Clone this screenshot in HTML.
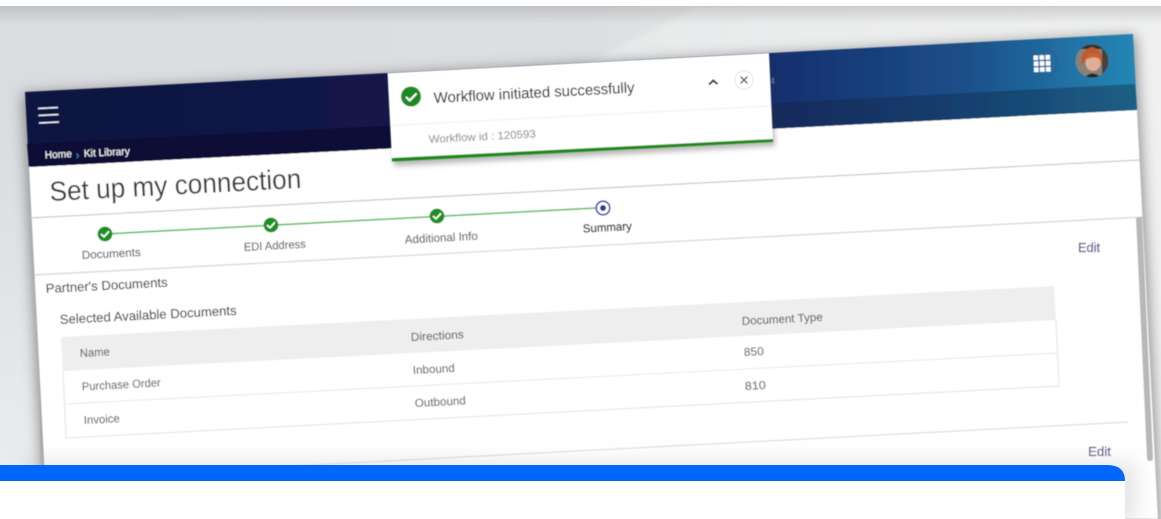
<!DOCTYPE html>
<html><head><meta charset="utf-8"><title>Set up my connection</title>
<style>
html,body{margin:0;padding:0;background:#fff;width:1161px;height:519px;overflow:hidden}
svg{display:block}
text{font-family:"Liberation Sans",sans-serif}
</style></head><body>
<svg width="1161" height="519" viewBox="0 0 1161 519" xmlns="http://www.w3.org/2000/svg">
<defs>
<linearGradient id="bg" x1="0" y1="0" x2="1" y2="0"><stop offset="0" stop-color="#dadde0"/><stop offset=".5" stop-color="#dcdee0"/><stop offset=".7" stop-color="#e6e7e8"/><stop offset="1" stop-color="#f0f0f0"/></linearGradient>
<linearGradient id="top" x1="0" y1="0" x2="0" y2="1"><stop offset="0" stop-color="#9a9da0" stop-opacity=".4"/><stop offset="1" stop-color="#9a9da0" stop-opacity="0"/></linearGradient>
<linearGradient id="lft" x1="0" y1="0" x2="0" y2="1"><stop offset="0" stop-color="#eceef0" stop-opacity="0"/><stop offset="1" stop-color="#eceef0" stop-opacity="1"/></linearGradient>
<linearGradient id="hd" gradientUnits="userSpaceOnUse" x1="25" y1="0" x2="1135" y2="0"><stop offset="0" stop-color="#11133f"/><stop offset=".35" stop-color="#12174b"/><stop offset=".68" stop-color="#17306f"/><stop offset=".85" stop-color="#1b5089"/><stop offset="1" stop-color="#2587b6"/></linearGradient>
<linearGradient id="band" gradientUnits="userSpaceOnUse" x1="25" y1="0" x2="1135" y2="0"><stop offset="0" stop-color="#0c0d34"/><stop offset=".35" stop-color="#0e1139"/><stop offset=".7" stop-color="#142c5f"/><stop offset=".86" stop-color="#174270"/><stop offset="1" stop-color="#1d5f84"/></linearGradient>
<filter id="s" x="-10%" y="-10%" width="120%" height="120%"><feGaussianBlur stdDeviation="7"/></filter>
<filter id="b12" x="-10%" y="-50%" width="120%" height="200%"><feGaussianBlur stdDeviation="10"/></filter>
<filter id="t" x="-10%" y="-20%" width="120%" height="140%"><feGaussianBlur stdDeviation="3"/></filter>
<filter id="soft" x="-2%" y="-2%" width="104%" height="104%"><feGaussianBlur stdDeviation=".42"/></filter>
<clipPath id="av"><circle cx="1092" cy="61" r="16.5"/></clipPath>
</defs>
<rect x="0" y="0" width="1161" height="519" fill="#fff"/>
<rect x="0" y="6" width="1161" height="513" fill="url(#bg)"/>
<rect x="0" y="130" width="40" height="389" fill="url(#lft)"/>
<polygon points="590,62 700,6 1161,6 1161,62" fill="#eff0f0" opacity=".6" filter="url(#t)"/>
<rect x="0" y="6" width="1161" height="18" fill="url(#top)"/>

<polygon points="23,94 1135,36 1160,530 45,530" fill="#5c5c5c" opacity=".7" filter="url(#s)"/>

<g filter="url(#soft)">
<polygon points="29,167 1137,110 1158,519 47,519" fill="#fff"/>
<polygon points="25,92 1133,34 1137,110 29,167" fill="url(#hd)"/>
<polygon points="27,144 400,125 775,103 1135,84 1137,110 29,167" fill="url(#band)"/>

<g stroke="#eef0f4" stroke-width="1.5"><line x1="38" y1="108.5" x2="58" y2="107.5"/><line x1="38.5" y1="115.5" x2="58.5" y2="114.5"/><line x1="39" y1="123" x2="59" y2="122"/></g>

<text x="45" y="158.5" font-size="10.5" fill="#f0f3f8" stroke="#f0f3f8" stroke-width=".15" textLength="27" lengthAdjust="spacingAndGlyphs" transform="rotate(-3 45 158.5)">Home</text>
<path d="M76.5 153.5l2 2.2-1.8 2.4" fill="none" stroke="#3f87b0" stroke-width="1"/>
<text x="84" y="157" font-size="10.5" fill="#f0f3f8" stroke="#f0f3f8" stroke-width=".15" textLength="46" lengthAdjust="spacingAndGlyphs" transform="rotate(-3 84 157)">Kit Library</text>

<text x="50" y="201" font-size="27.5" fill="#38383c" textLength="252" lengthAdjust="spacingAndGlyphs" transform="rotate(-3 50 201)">Set up my connection</text>

<line x1="30" y1="218" x2="1140" y2="160" stroke="#c9c9c9" stroke-width="1.2"/>
<line x1="34" y1="275" x2="1143" y2="217" stroke="#d4d4d4" stroke-width="1.2"/>

<line x1="105" y1="234" x2="596" y2="208" stroke="#4fb84f" stroke-width="1.5"/>
<g fill="#1f8f22"><circle cx="105" cy="234" r="7.4"/><circle cx="271" cy="225" r="7.4"/><circle cx="437" cy="216" r="7.4"/></g>
<g fill="none" stroke="#fff" stroke-width="1.7" stroke-linecap="round" stroke-linejoin="round"><path d="M101.5 234.5l2.5 2.3 4.5-5"/><path d="M267.5 225.5l2.5 2.3 4.5-5"/><path d="M433.5 216.5l2.5 2.3 4.5-5"/></g>
<circle cx="603" cy="208" r="6.8" fill="#fff" stroke="#2e3a96" stroke-width="1.6"/><circle cx="603" cy="208" r="3" fill="#2e3a96"/>

<g font-size="11.5" fill="#5a5a5e" stroke="#5a5a5e" stroke-width=".12">
<text x="82" y="259" textLength="59" lengthAdjust="spacingAndGlyphs" transform="rotate(-3 82 259)">Documents</text>
<text x="244" y="251" textLength="62" lengthAdjust="spacingAndGlyphs" transform="rotate(-3 244 251)">EDI Address</text>
<text x="405" y="243.5" textLength="73" lengthAdjust="spacingAndGlyphs" transform="rotate(-3 405 243.5)">Additional Info</text>
</g>
<text x="583" y="232.5" font-size="11.5" fill="#2c2c32" stroke="#2c2c32" stroke-width=".3" textLength="49" lengthAdjust="spacingAndGlyphs" transform="rotate(-3 583 232.5)">Summary</text>

<text x="1078" y="252" font-size="12.5" fill="#46447a" stroke="#46447a" stroke-width=".15" textLength="22" lengthAdjust="spacingAndGlyphs">Edit</text>
<text x="1088" y="456" font-size="12.5" fill="#46447a" stroke="#46447a" stroke-width=".15" textLength="23" lengthAdjust="spacingAndGlyphs">Edit</text>

<text x="46" y="293" font-size="13" fill="#444448" stroke="#444448" stroke-width=".12" textLength="122" lengthAdjust="spacingAndGlyphs" transform="rotate(-3 46 293)">Partner's Documents</text>
<text x="60" y="324" font-size="13" fill="#444448" stroke="#444448" stroke-width=".12" textLength="177" lengthAdjust="spacingAndGlyphs" transform="rotate(-3 60 324)">Selected Available Documents</text>

<polygon points="61,337 1054,286 1056,320 63,371" fill="#eeeeee"/>
<polyline points="63,371 66,438 1059,386 1056,320" fill="none" stroke="#e6e6e6" stroke-width="1.2"/>
<line x1="65" y1="404" x2="1058" y2="353" stroke="#ececec" stroke-width="1.2"/>

<g font-size="11.5" fill="#606064" stroke="#606064" stroke-width=".1">
<text x="80" y="357" textLength="30" lengthAdjust="spacingAndGlyphs" transform="rotate(-3 80 357)">Name</text>
<text x="411" y="341" textLength="53" lengthAdjust="spacingAndGlyphs" transform="rotate(-3 411 341)">Directions</text>
<text x="742" y="325" textLength="81" lengthAdjust="spacingAndGlyphs" transform="rotate(-3 742 325)">Document Type</text>
<text x="82" y="390.5" textLength="79" lengthAdjust="spacingAndGlyphs" transform="rotate(-3 82 390.5)">Purchase Order</text>
<text x="413" y="374" textLength="42" lengthAdjust="spacingAndGlyphs" transform="rotate(-3 413 374)">Inbound</text>
<text x="744" y="356" textLength="20" lengthAdjust="spacingAndGlyphs" transform="rotate(-3 744 356)">850</text>
<text x="84" y="424" textLength="36" lengthAdjust="spacingAndGlyphs" transform="rotate(-3 84 424)">Invoice</text>
<text x="415" y="407" textLength="51" lengthAdjust="spacingAndGlyphs" transform="rotate(-3 415 407)">Outbound</text>
<text x="745" y="390" textLength="21" lengthAdjust="spacingAndGlyphs" transform="rotate(-3 745 390)">810</text>
</g>
<line x1="140" y1="474" x2="1128" y2="422" stroke="#dedede" stroke-width="1.2"/>

<path d="M1136 218 L1142 217 L1153 458 Q1153 461 1150 461 Q1147 461 1147 458Z" fill="#b8b8b8"/>

<circle cx="1041" cy="63" r="16" fill="none" stroke="#27609a" stroke-width="1.2"/>
<g fill="#fff">
<rect x="1033.5" y="55.5" width="4.6" height="4.6"/><rect x="1039.5" y="55.2" width="4.6" height="4.6"/><rect x="1045.5" y="55" width="4.6" height="4.6"/>
<rect x="1033.8" y="61.5" width="4.6" height="4.6"/><rect x="1039.8" y="61.2" width="4.6" height="4.6"/><rect x="1045.8" y="61" width="4.6" height="4.6"/>
<rect x="1034" y="67.5" width="4.6" height="4.6"/><rect x="1040" y="67.2" width="4.6" height="4.6"/><rect x="1046" y="67" width="4.6" height="4.6"/>
</g>
<g clip-path="url(#av)">
<rect x="1075" y="44" width="34" height="34" fill="#86827a"/>
<rect x="1102" y="44" width="7" height="30" fill="#45423d"/>
<rect x="1075" y="44" width="34" height="5" fill="#3a2c28"/>
<path d="M1082 66 Q1079 50 1092 47 Q1104 49 1102 66 Q1100 58 1095 55 Q1087 55 1085 60Z" fill="#bd5a30"/>
<ellipse cx="1093" cy="63" rx="7.5" ry="8" fill="#dfae94"/>
<path d="M1085 60 Q1086 53 1094 53 Q1100 54 1101 60 Q1094 55 1085 60Z" fill="#cc6430"/>
<path d="M1084 78 Q1092 69 1102 78Z" fill="#2b2626"/>
</g>
<text x="770" y="84" font-size="9" fill="#6a7ba8">4</text>
</g>

<polygon points="390,78 770,58 775,146 394,166" fill="#333" opacity=".35" filter="url(#t)"/>
<g filter="url(#soft)">
<polygon points="387.5,73 769,53 773,142 392,161" fill="#fff"/>
<polygon points="391.8,158 773,139 773,142 392,161.5" fill="#1c8a12"/>
<line x1="390" y1="125.5" x2="771" y2="106" stroke="#f0f0f0" stroke-width="1.2"/>
<circle cx="411" cy="96.5" r="10" fill="#1f8a20"/>
<path d="M406.5 97.5l3.2 3 6.3-6.5" fill="none" stroke="#fff" stroke-width="2" stroke-linecap="round" stroke-linejoin="round"/>
<text x="434" y="103" font-size="15" fill="#333337" stroke="#333337" stroke-width=".12" textLength="201" lengthAdjust="spacingAndGlyphs" transform="rotate(-3 434 103)">Workflow initiated successfully</text>
<text x="429" y="143" font-size="11" fill="#929296" stroke="#929296" stroke-width=".1" textLength="107" lengthAdjust="spacingAndGlyphs" transform="rotate(-3 429 143)">Workflow id : 120593</text>
<path d="M709 84.5l4.3-4 4.3 3.6" fill="none" stroke="#2c2c30" stroke-width="2"/>
<circle cx="744" cy="80" r="9.3" fill="#fff" stroke="#e2e2e4" stroke-width="1"/>
<path d="M740.5 76.5l7 7M747.5 76.5l-7 7" stroke="#55555a" stroke-width="1.4"/>
</g>

<rect x="20" y="462" width="1116" height="60" fill="#bbb" opacity=".4" filter="url(#b12)"/>
<path d="M0 465 H1107 Q1125 465 1125 483 V519 H0Z" fill="#fff"/>
<path d="M0 465 H1107 Q1125 465 1125 481 H0Z" fill="#0066ff"/>
</svg>
</body></html>
